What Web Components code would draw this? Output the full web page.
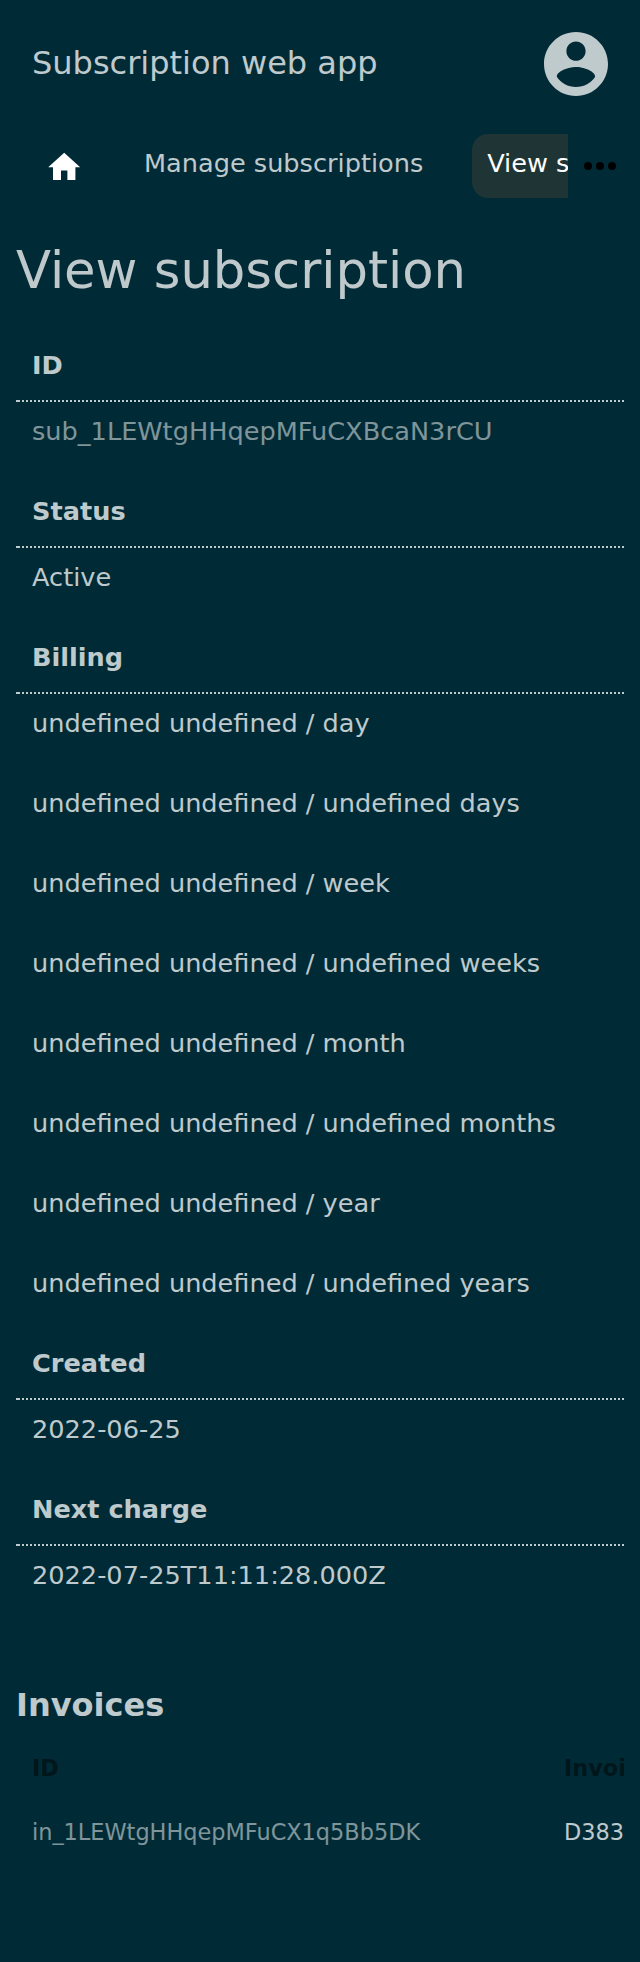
<!DOCTYPE html>
<html lang="en">
<head>
<meta charset="utf-8">
<title>Subscription web app</title>
<style>
html { background: #002b36; }
body { margin: 0; font-family: "DejaVu Sans", sans-serif; font-size: 25.6px; color: rgba(255,255,255,.75); background: #002b36; }
</style>
</head>
<body>
<subscription-page></subscription-page>
<script>
const define = (name, html) => {
  const template = document.createElement('template');
  template.innerHTML = html;
  customElements.define(name, class extends HTMLElement {
    constructor() {
      super();
      this.attachShadow({ mode: 'open' }).append(template.content.cloneNode(true));
    }
  });
};

define('app-header', `
<style>
:host { display: flex; justify-content: space-between; align-items: center; height: 128px; padding: 0 32px; box-sizing: border-box; }
.title { font-size: 32px; line-height: 38px; margin-top: -2px; }
svg { display: block; width: 64px; height: 64px; fill: #bfcacd; }
</style>
<div class="title"><slot></slot></div>
<svg viewBox="2 2 20 20"><path d="M12 2C6.48 2 2 6.48 2 12s4.48 10 10 10 10-4.48 10-10S17.52 2 12 2zm0 3c1.66 0 3 1.34 3 3s-1.34 3-3 3-3-1.34-3-3 1.34-3 3-3zm0 14.2c-2.5 0-4.71-1.28-6-3.22.03-1.99 4-3.08 6-3.08 1.99 0 5.97 1.09 6 3.08-1.29 1.94-3.5 3.22-6 3.22z"/></svg>`);

define('nav-item', `
<style>
:host { display: block; flex: none; height: 64px; box-sizing: border-box; padding: 14px 15.36px; line-height: 30px; border-radius: 16px; white-space: nowrap; }
:host([active]) { background: #1f3535; color: #fff; }
</style>
<slot></slot>`);

define('nav-bar', `
<style>
:host { display: flex; padding: 6px 16px 0; height: 70px; box-sizing: border-box; }
.items { display: flex; width: 552px; overflow: hidden; }
.home { flex: none; width: 96px; height: 64px; padding: 14px 28.8px 0; box-sizing: border-box; margin-right: 16px; }
.home svg { display: block; width: 38.4px; height: 38.4px; fill: #fff; }
.gap { padding-left: 16px; margin-right: 33.16px; }
.more { display: block; flex: none; width: 48px; height: 48px; margin: 8px 0 0 8px; fill: #000; }
</style>
<div class="items">
<div class="home"><svg viewBox="0 0 24 24"><path d="M10 20v-6h4v6h5v-8h3L12 3 2 12h3v8z"/></svg></div>
<nav-item class="gap">Manage subscriptions</nav-item>
<nav-item active>View subscription</nav-item>
</div>
<svg class="more" viewBox="0 0 24 24"><circle cx="6" cy="12" r="2"/><circle cx="12" cy="12" r="2"/><circle cx="18" cy="12" r="2"/></svg>`);

define('detail-group', `
<style>
:host { display: block; }
.head { height: 66px; padding: 14px 16px 0; box-sizing: border-box; line-height: 30px; font-weight: bold;
  background:
    linear-gradient(#bfcacd, #bfcacd) left bottom / 4px 2px no-repeat,
    repeating-linear-gradient(to right, transparent 0 2px, #bfcacd 2px 4px) left bottom / 100% 2px no-repeat; }
</style>
<div class="head"><slot name="label"></slot></div>
<slot></slot>`);

define('detail-row', `
<style>
:host { display: block; height: 80px; padding: 14px 16px 0; box-sizing: border-box; line-height: 30px; white-space: nowrap; }
:host([muted]) { color: rgba(255,255,255,.5); }
</style>
<slot></slot>`);

define('invoice-table', `
<style>
:host { display: block; overflow: hidden; font-size: 22.4px; }
.grid { display: grid; grid-template-columns: 532px auto; grid-auto-rows: 64px; line-height: 26px; white-space: nowrap; }
.grid > * { padding: 19px 0 0 16px; }
.th { font-weight: bold; color: #00161b; }
.id { color: rgba(255,255,255,.5); }
</style>
<div class="grid">
<div class="th">ID</div><div class="th">Invoi</div>
<div class="id">in_1LEWtgHHqepMFuCX1q5Bb5DK</div><div>D383</div>
</div>`);

define('subscription-page', `
<style>
:host { display: block; height: 1962px; overflow: hidden; }
main { padding: 0 16px; }
h1 { margin: 0; height: 138px; padding-top: 42px; box-sizing: border-box; font-size: 51.2px; line-height: 60px; font-weight: normal; }
h2 { margin: 0; height: 110px; padding-top: 60px; box-sizing: border-box; font-size: 32px; line-height: 38px; }
</style>
<app-header>Subscription web app</app-header>
<nav-bar></nav-bar>
<main>
<h1>View subscription</h1>
<detail-group><span slot="label">ID</span>
<detail-row muted>sub_1LEWtgHHqepMFuCXBcaN3rCU</detail-row></detail-group>
<detail-group><span slot="label">Status</span>
<detail-row>Active</detail-row></detail-group>
<detail-group><span slot="label">Billing</span>
<detail-row>undefined undefined / day</detail-row>
<detail-row>undefined undefined / undefined days</detail-row>
<detail-row>undefined undefined / week</detail-row>
<detail-row>undefined undefined / undefined weeks</detail-row>
<detail-row>undefined undefined / month</detail-row>
<detail-row>undefined undefined / undefined months</detail-row>
<detail-row>undefined undefined / year</detail-row>
<detail-row>undefined undefined / undefined years</detail-row></detail-group>
<detail-group><span slot="label">Created</span>
<detail-row>2022-06-25</detail-row></detail-group>
<detail-group><span slot="label">Next charge</span>
<detail-row>2022-07-25T11:11:28.000Z</detail-row></detail-group>
<h2>Invoices</h2>
<invoice-table></invoice-table>
</main>`);
</script>
</body>
</html>
